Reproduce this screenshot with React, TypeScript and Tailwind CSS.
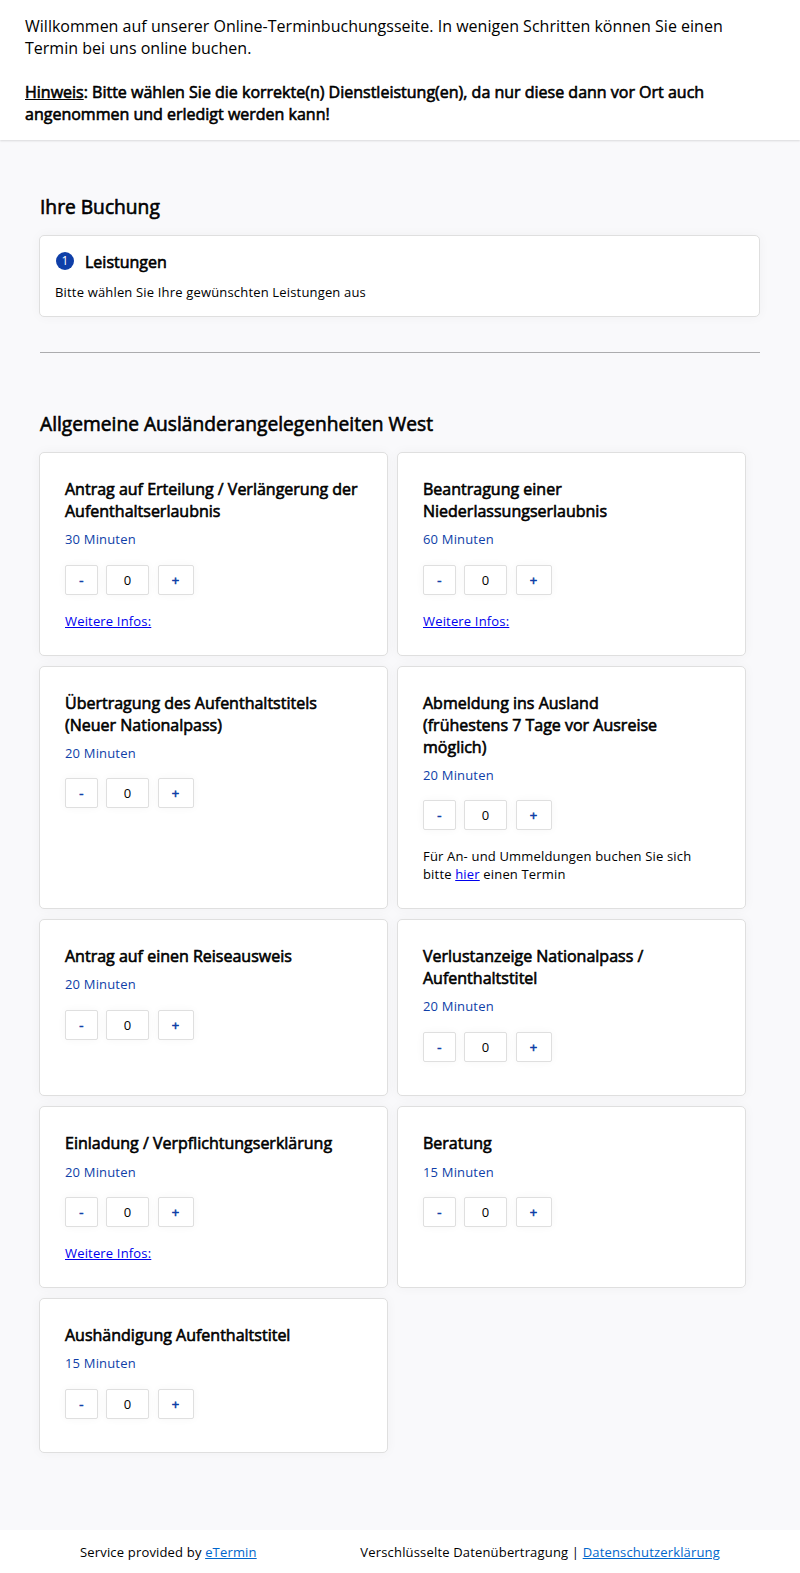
import type { ReactNode } from "react";

type Service = {
  title: ReactNode;
  minutes: number;
  height: string;
  minutesGap?: string;
  stepperGap?: string;
  info?: ReactNode;
};

const bold = "font-normal [-webkit-text-stroke:0.6px_#000]";

const moreInfo = (
  <a href="#" className="text-[#0000ee] underline">Weitere Infos:</a>
);

const services: Service[] = [
  { title: <>Antrag auf Erteilung / Verlängerung der Aufenthaltserlaubnis</>, minutes: 30, height: "h-[204px]", info: moreInfo },
  { title: <>Beantragung einer Niederlassungserlaubnis</>, minutes: 60, height: "h-[204px]", info: moreInfo },
  { title: <>Übertragung des Aufenthaltstitels<br />(Neuer Nationalpass)</>, minutes: 20, height: "h-[243px]", stepperGap: "mt-4" },
  {
    title: <>Abmeldung ins Ausland<br />(frühestens 7 Tage vor Ausreise möglich)</>,
    minutes: 20,
    height: "h-[243px]",
    stepperGap: "mt-4",
    info: <>Für An- und Ummeldungen buchen Sie sich bitte <a href="#" className="text-[#0000ee] underline">hier</a> einen Termin</>,
  },
  { title: <>Antrag auf einen Reiseausweis</>, minutes: 20, height: "h-[177px]" },
  { title: <>Verlustanzeige Nationalpass / Aufenthaltstitel</>, minutes: 20, height: "h-[177px]" },
  { title: <>Einladung / Verpflichtungserklärung</>, minutes: 20, height: "h-[182px]", minutesGap: "mt-[9px]", stepperGap: "mt-4", info: moreInfo },
  { title: <>Beratung</>, minutes: 15, height: "h-[182px]", minutesGap: "mt-[9px]", stepperGap: "mt-4" },
  { title: <>Aushändigung Aufenthaltstitel</>, minutes: 15, height: "h-[155px]" },
];

const box = "flex h-[30px] items-center justify-center rounded-[2px] border border-[#dfdfdf] bg-white shadow-[0_0_8px_rgba(0,0,0,0.04)]";
const sign = "text-[#0f3fa8] [-webkit-text-stroke:0.6px_#0f3fa8]";

function Stepper({ gap }: { gap: string }) {
  return (
    <div className={`${gap} flex`}>
      <button className={`${box} ${sign} w-[33px]`}>-</button>
      <div className={`${box} ml-2 w-[43px]`}>0</div>
      <button className={`${box} ${sign} ml-[9px] w-9 pr-px`}>+</button>
    </div>
  );
}

function ServiceCard({ title, minutes, height, minutesGap = "mt-2", stepperGap = "mt-[17px]", info }: Service) {
  return (
    <article className={`${height} rounded-[5px] border border-[#dfdfdf] bg-white px-[25px] pt-[25px] shadow-[0_0_12px_rgba(0,0,0,0.04)]`}>
      <h3 className={`${bold} text-base leading-[22px] tracking-normal`}>{title}</h3>
      <p className={`${minutesGap} text-[#0f3fa8]`}>{minutes} Minuten</p>
      <Stepper gap={stepperGap} />
      {info && <p className="mt-[17px]">{info}</p>}
    </article>
  );
}

export default function App() {
  return (
    <div className="flex h-[1573px] flex-col bg-[#f9f9fb] font-['Open_Sans',sans-serif] text-[13px] leading-[18px] tracking-[0.17px] text-black">
      <header className="h-[140px] shrink-0 bg-white px-[25px] pt-[15px] text-base leading-[22px] tracking-[0.01px] shadow-[0_1px_2px_rgba(0,0,0,0.13)]">
        <p>Willkommen auf unserer Online-Terminbuchungsseite. In wenigen Schritten können Sie einen Termin bei uns online buchen.</p>
        <p className={`${bold} mt-[22px] tracking-normal`}>
          <span className="underline">Hinweis</span>: Bitte wählen Sie die korrekte(n) Dienstleistung(en), da nur diese dann vor Ort auch angenommen und erledigt werden kann!
        </p>
      </header>

      <main className="grow px-[39px] pt-[53px]">
        <h2 className={`${bold} pl-px text-[19.2px] leading-7 tracking-normal`}>Ihre Buchung</h2>
        <section className="mt-[14px] mr-px h-[82px] rounded-[5px] border border-[#dfdfdf] bg-white px-[15px] pt-[15px] shadow-[0_0_12px_rgba(0,0,0,0.04)]">
          <div className="flex items-start">
            <span className="mt-px ml-px flex size-[18px] items-center justify-center rounded-full bg-[#0f3fa8] text-[12px] tracking-normal text-white">1</span>
            <h3 className={`${bold} ml-[11px] text-base leading-[22px] tracking-normal`}>Leistungen</h3>
          </div>
          <p className="mt-[10px]">Bitte wählen Sie Ihre gewünschten Leistungen aus</p>
        </section>
        <hr className="mx-px mt-[35px] border-t border-[#acacae]" />
        <h2 className={`${bold} mt-[57px] pl-px text-[19.2px] leading-7 tracking-normal`}>Allgemeine Ausländerangelegenheiten West</h2>
        <div className="mt-[14px] grid grid-cols-[349px_349px] gap-x-[9px] gap-y-[10px]">
          {services.map((service, i) => (
            <ServiceCard key={i} {...service} />
          ))}
        </div>
      </main>

      <footer className="flex h-[43px] shrink-0 justify-between bg-white px-[80px] pt-[13px]">
        <p>Service provided by <a href="#" className="text-[#0066cc] underline">eTermin</a></p>
        <p>Verschlüsselte Datenübertragung | <a href="#" className="text-[#0066cc] underline">Datenschutzerklärung</a></p>
      </footer>
    </div>
  );
}
